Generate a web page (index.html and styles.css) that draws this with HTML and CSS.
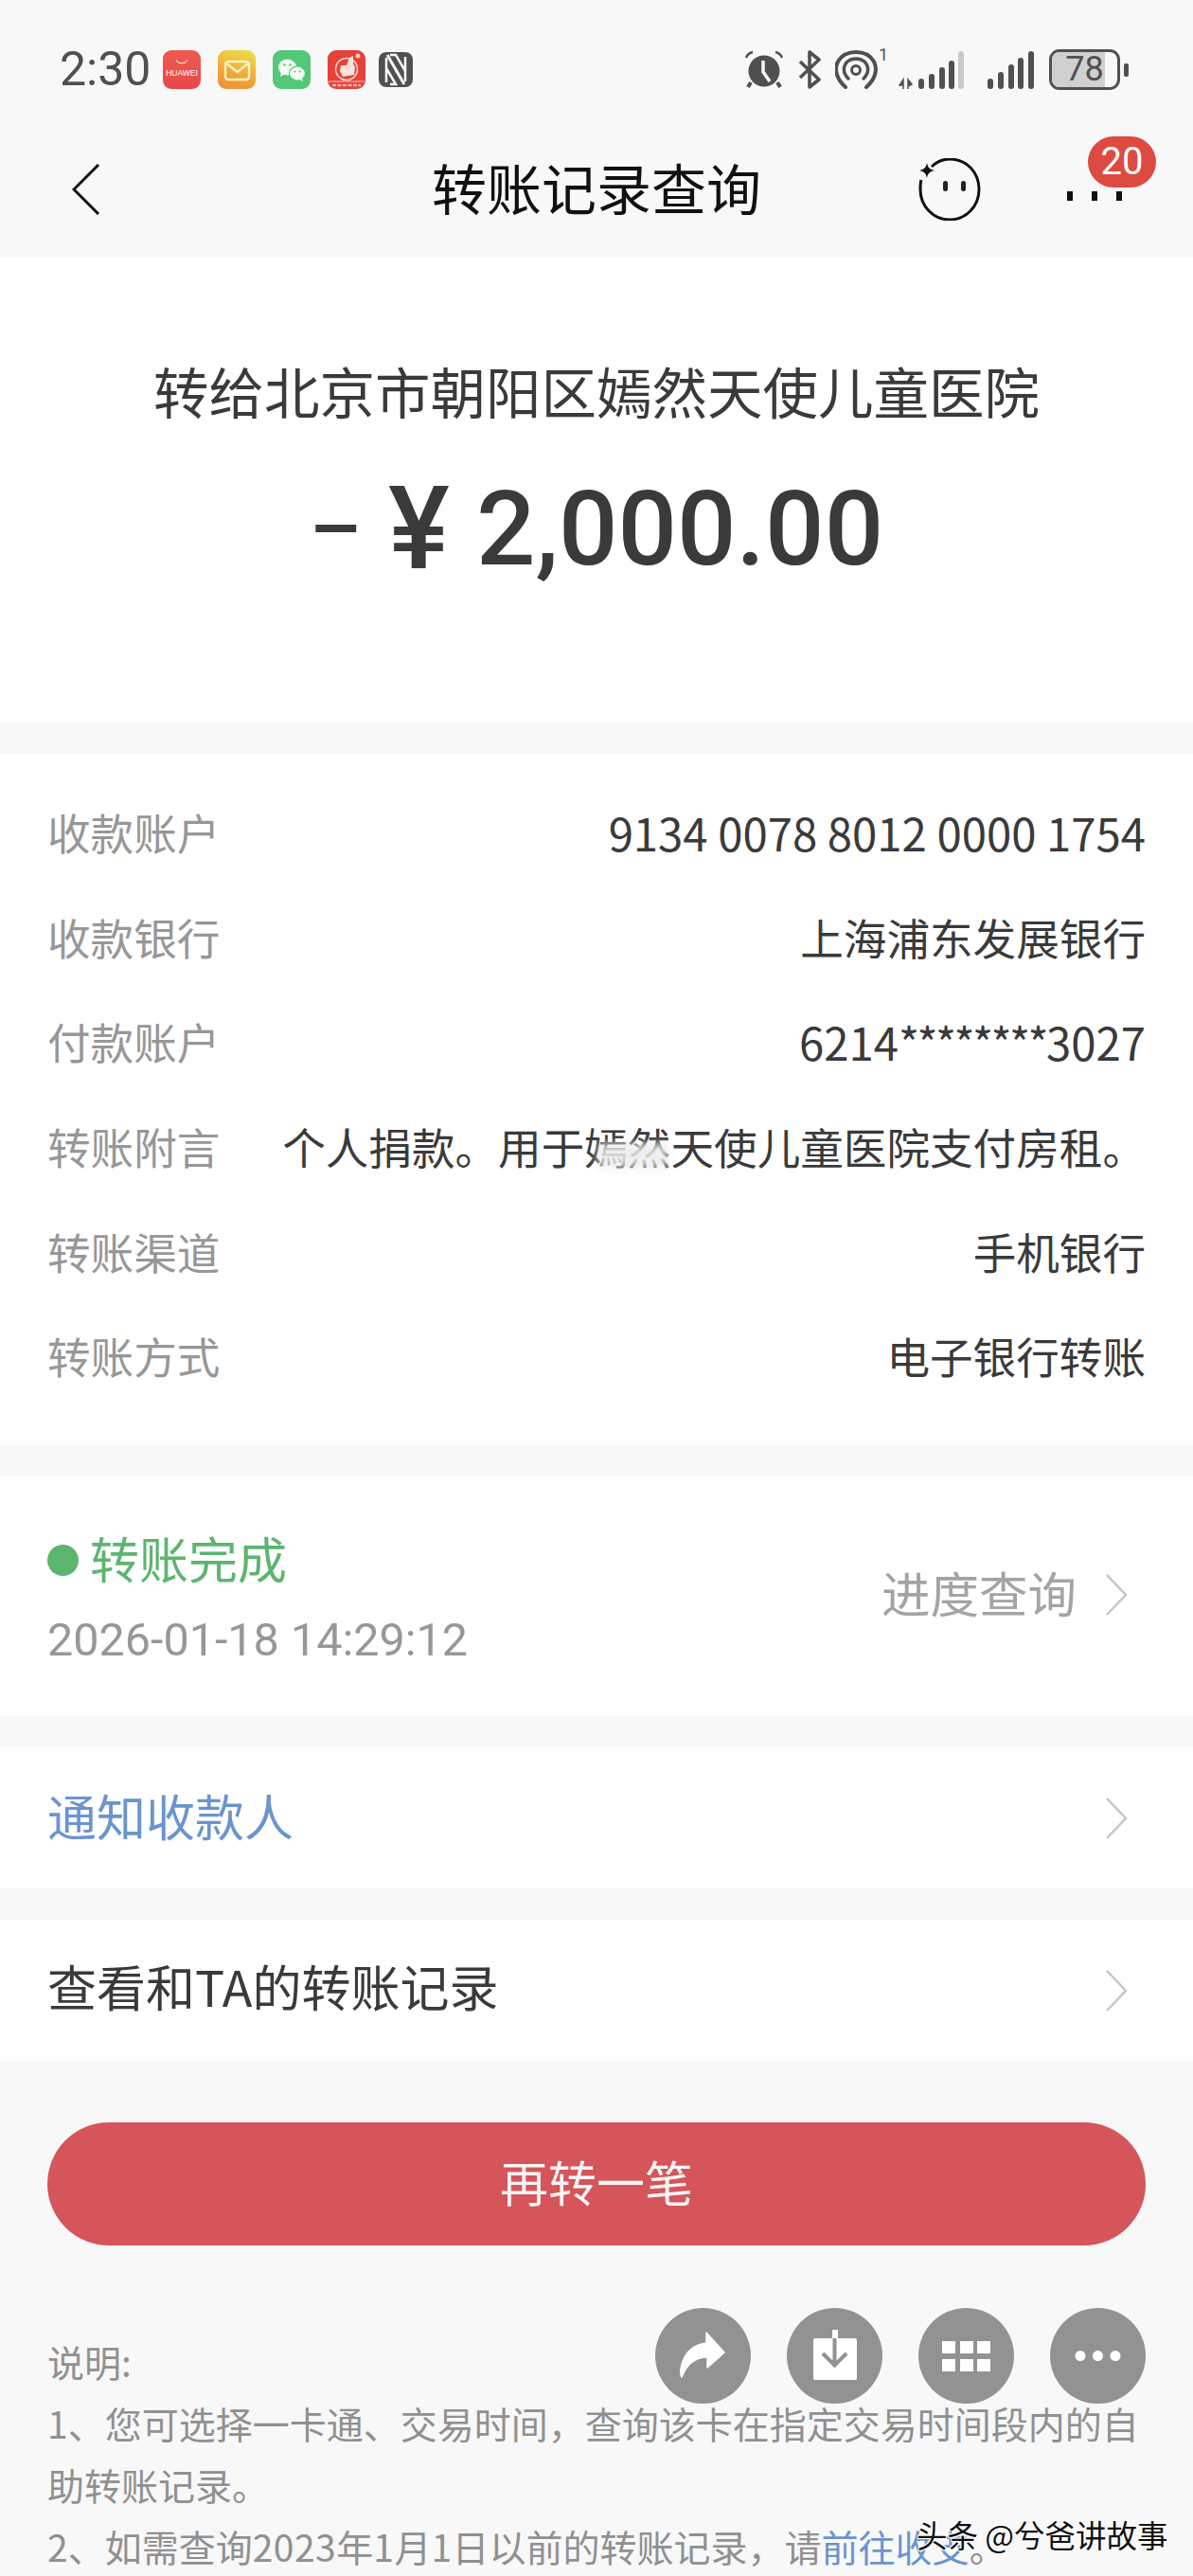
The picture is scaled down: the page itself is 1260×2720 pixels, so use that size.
FILE: index.html
```html
<!DOCTYPE html>
<html lang="zh-CN">
<head>
<meta charset="utf-8">
<title>转账记录查询</title>
<link rel="stylesheet" href="styles.css">
</head>
<body>
<div class="page">
  <header class="top">
    <div class="status">
      <div class="status-left">
        <span class="time">2:30</span>
        <svg class="app" viewBox="0 0 40 41"><defs><linearGradient id="hw" x1="0" y1="0" x2="0" y2="1"><stop offset="0" stop-color="#ef5a50"/><stop offset="1" stop-color="#e8474a"/></linearGradient></defs><rect width="40" height="41" rx="9" fill="url(#hw)"/><path d="M14 10c1 5 11 5 12 0" fill="none" stroke="#fff" stroke-width="1"/><text x="20" y="27" class="hw-text" text-anchor="middle">HUAWEI</text></svg>
        <svg class="app" viewBox="0 0 40 41"><defs><linearGradient id="ml" x1="0.7" y1="0" x2="0.4" y2="1"><stop offset="0" stop-color="#eadd45"/><stop offset="0.6" stop-color="#f0a93a"/><stop offset="1" stop-color="#ef9334"/></linearGradient></defs><rect width="40" height="41" rx="9" fill="url(#ml)"/><rect x="8" y="12" width="25" height="19" rx="3" fill="none" stroke="#fdf2c2" stroke-width="2.4"/><path d="M9 14l11.500 9 11.500-9" fill="none" stroke="#fdf2c2" stroke-width="2.400"/></svg>
        <svg class="app" viewBox="0 0 40 41"><rect width="40" height="41" rx="9" fill="#54c878"/><ellipse cx="15.500" cy="18" rx="9.500" ry="8.500" fill="#f1fbf3"/><path d="M9 23l-1 5 5-3z" fill="#f1fbf3"/><ellipse cx="26" cy="24.500" rx="8.500" ry="7.500" fill="#f1fbf3" stroke="#54c878" stroke-width="1.200"/><path d="M31 30l1 3-4-2z" fill="#f1fbf3"/><circle cx="12.500" cy="15.500" r="1.200" fill="#54c878"/><circle cx="18.500" cy="15.500" r="1.200" fill="#54c878"/><circle cx="23.500" cy="22.500" r="1" fill="#54c878"/><circle cx="28.500" cy="22.500" r="1" fill="#54c878"/></svg>
        <svg class="app app-last" viewBox="0 0 40 41"><rect width="40" height="41" rx="9" fill="#e5423a"/><circle cx="20" cy="20" r="11.500" fill="none" stroke="#f9d5cc" stroke-width="1.500"/><path d="M14 16l6 0 3-8 4-2 0 8 2 4-1 8-12 2-3-6z" fill="#fbe3da"/><circle cx="32" cy="6" r="2.500" fill="#f7c6bb"/><path d="M1 33h38" stroke="#f7c6bb" stroke-width="1"/><path d="M5 37h30" stroke="#f6b5ab" stroke-width="2.500" stroke-dasharray="4 1.500"/></svg>
        <svg class="nfc" viewBox="0 0 36 37"><rect width="36" height="37" rx="8" fill="#505050"/><path d="M9 3l18 31" stroke="#f8f8f8" stroke-width="3"/><path d="M8 6v26M28 5v26" stroke="#f8f8f8" stroke-width="2.500"/><path d="M12 3h6l10 17M8 17l10 17h-6" fill="none" stroke="#f8f8f8" stroke-width="2.500"/></svg>
      </div>
      <div class="status-right">
        <svg class="st-alarm" viewBox="0 0 42 41"><path d="M2 8c1-3 3-5 7-6M40 8c-1-3-3-5-7-6" fill="none" stroke="#505050" stroke-width="2.500"/><circle cx="21" cy="22" r="16.500" fill="#505050"/><path d="M20 11v12l7 10" fill="none" stroke="#f8f8f8" stroke-width="3.500"/><path d="M7 34l-3 5M35 34l3 5" stroke="#505050" stroke-width="4"/></svg>
        <svg class="st-bt" viewBox="0 0 24 41"><path d="M2 29L22 10 12 2v37l10-8L2 12" fill="none" stroke="#505050" stroke-width="3.600" stroke-linejoin="round"/></svg>
        <svg class="st-hot" viewBox="0 0 46 41"><path d="M11 39C1 30-1 20 3 12 7 5 14 2 22 2s15 3 19 10c4 8 2 18-8 27" fill="none" stroke="#505050" stroke-width="4" stroke-linecap="round"/><path d="M14 30C8 24 8 17 13 12c5-4 13-4 18 0 5 5 5 12-1 18" fill="none" stroke="#505050" stroke-width="3.500" stroke-linecap="round"/><circle cx="22" cy="21" r="4.500" fill="none" stroke="#505050" stroke-width="3"/></svg>
        <span class="sim-one">1</span>
        <svg class="st-sig1" viewBox="0 0 70 41"><path d="M5 41V31l-4 6h4M10 41V31l4 5-4 2z" fill="#505050" stroke="#505050" stroke-width="1.500"/><g fill="#505050"><rect x="21" y="30" width="6" height="11" rx="3"/><rect x="32" y="25" width="6" height="16" rx="3"/><rect x="43" y="18" width="6" height="23" rx="3"/><rect x="53" y="11" width="6" height="30" rx="3"/></g><rect x="63" y="1" width="6" height="40" rx="3" fill="#c9c9c9"/></svg>
        <svg class="st-sig2" viewBox="0 0 49 41"><g fill="#505050"><rect x="0" y="30" width="6" height="11" rx="3"/><rect x="11" y="23" width="6" height="18" rx="3"/><rect x="22" y="15" width="6" height="26" rx="3"/><rect x="32" y="8" width="6" height="33" rx="3"/><rect x="43" y="1" width="6" height="40" rx="3"/></g></svg>
        <div class="battery"><span class="battery-level"></span><span class="battery-num">78</span></div>
        <span class="battery-nub"></span>
      </div>
    </div>
    <nav class="nav">
      <svg class="back" viewBox="0 0 30 54"><path d="M28 1L2 27l26 26" fill="none" stroke="#111" stroke-width="3"/></svg>
      <h1 class="title">转账记录查询</h1>
      <div class="nav-right">
        <svg class="face" viewBox="0 0 66 66"><path d="M14 9C20 3 26 1 33 1c18 0 31 14 31 32 0 18-14 32-31 32S2 51 2 33c0-4 0-7 1-10" fill="none" stroke="#111" stroke-width="3"/><path d="M9 5c1 5 3 7 8 8-5 1-7 3-8 8-1-5-3-7-8-8 5-1 7-3 8-8z" fill="#111"/><rect x="26" y="24" width="5" height="11" rx="2.500" fill="#222"/><rect x="45" y="24" width="5" height="11" rx="2.500" fill="#222"/></svg>
        <div class="more">
          <i class="more-dot"></i><i class="more-dot"></i><i class="more-dot"></i>
          <span class="badge">20</span>
        </div>
      </div>
    </nav>
  </header>

  <section class="card summary">
    <div class="payee">转给北京市朝阳区嫣然天使儿童医院</div>
    <div class="amount"><span class="minus">–</span><span class="yen">¥</span><span>2,000.00</span></div>
  </section>

  <section class="card details">
    <div class="row"><span class="label">收款账户</span><span class="value num">9134 0078 8012 0000 1754</span></div>
    <div class="row"><span class="label">收款银行</span><span class="value">上海浦东发展银行</span></div>
    <div class="row"><span class="label">付款账户</span><span class="value num">6214<span class="stars">********</span>3027</span></div>
    <div class="row"><span class="label">转账附言</span><span class="value">个人捐款。用于<span class="blurred">嫣然</span>天使儿童医院支付房租。</span></div>
    <div class="row"><span class="label">转账渠道</span><span class="value">手机银行</span></div>
    <div class="row"><span class="label">转账方式</span><span class="value">电子银行转账</span></div>
  </section>

  <section class="card progress">
    <div class="progress-left">
      <div class="state"><i class="state-dot"></i>转账完成</div>
      <div class="stamp">2026-01-18 14:29:12</div>
    </div>
    <div class="progress-right">
      <span class="progress-text">进度查询</span>
      <svg class="chev" viewBox="0 0 24 44"><path d="M2 1l20 21L2 43" fill="none" stroke="#c6c6c6" stroke-width="2.500"/></svg>
    </div>
  </section>

  <section class="card link-row link-blue">
    <span>通知收款人</span>
    <svg class="chev" viewBox="0 0 24 44"><path d="M2 1l20 21L2 43" fill="none" stroke="#c6c6c6" stroke-width="2.500"/></svg>
  </section>

  <section class="card link-row link-dark">
    <span>查看和TA的转账记录</span>
    <svg class="chev" viewBox="0 0 24 44"><path d="M2 1l20 21L2 43" fill="none" stroke="#c6c6c6" stroke-width="2.500"/></svg>
  </section>

  <button class="again">再转一笔</button>

  <div class="notes">
    <p>说明:</p>
    <p>1、您可选择一卡通、交易时间，查询该卡在指定交易时间段内的自助转账记录。</p>
    <p>2、如需查询<span class="digits">2023</span>年<span class="digits">1</span>月<span class="digits">1</span>日以前的转账记录，请<span class="link">前往收支</span>。</p>
  </div>

  <div class="fabs">
    <span class="fab"><svg viewBox="0 0 101 101"><path d="M54 26L73 47 55 63V52C42 52 33 60 28 73 26 70 26 61 31 52 36 43 45 38 54 37Z" fill="#fff" stroke="#fff" stroke-width="1.500" stroke-linejoin="round"/></svg></span>
    <span class="fab"><svg viewBox="0 0 101 101"><path d="M28 34q0-2 2-2h18v-9h6v9h18q2 0 2 2v40q0 2-2 2H30q-2 0-2-2z" fill="#fff"/><path d="M50.500 32v30M38 48l12.500 12.500L63 48" fill="none" stroke="#929292" stroke-width="4"/></svg></span>
    <span class="fab"><svg viewBox="0 0 101 101"><g fill="#fff"><rect x="25" y="35" width="14" height="13"/><rect x="44" y="35" width="14" height="13"/><rect x="62" y="35" width="14" height="13"/><rect x="25" y="54" width="14" height="13"/><rect x="44" y="54" width="14" height="13"/><rect x="62" y="54" width="14" height="13"/></g></svg></span>
    <span class="fab"><svg viewBox="0 0 101 101"><g fill="#fff"><circle cx="32" cy="50.500" r="5.500"/><circle cx="50.500" cy="50.500" r="5.500"/><circle cx="69" cy="50.500" r="5.500"/></g></svg></span>
  </div>

  <div class="watermark">头条 @兮爸讲故事</div>
</div>
</body>
</html>
```
FILE: styles.css
```css
* { box-sizing: border-box; }
html, body { margin: 0; padding: 0; }
body { background: #f8f8f8; }
.page {
  position: relative;
  width: 1260px;
  height: 2720px;
  overflow: hidden;
  background: #f8f8f8;
  font-family: "Noto Sans CJK SC", "Noto Sans", sans-serif;
  color: #3a3a3a;
}
.top { height: 272px; display: flex; flex-direction: column; }
.status {
  display: flex;
  justify-content: space-between;
  align-items: center;
  height: 41px;
  margin-top: 53px;
  padding: 0 68px 0 63px;
}
.status-left { display: flex; align-items: center; }
.time {
  width: 109px;
  font-family: Roboto, sans-serif;
  font-size: 50px;
  color: #505050;
  line-height: 41px;
}
.app { width: 40px; height: 41px; margin-right: 18px; display: block; }
.app-last { margin-right: 14px; }
.hw-text { font-family: "Liberation Sans", sans-serif; font-size: 8.500px; fill: #fff; }
.nfc { width: 36px; height: 37px; display: block; }
.status-right { display: flex; align-items: center; position: relative; }
.st-alarm { width: 42px; height: 41px; display: block; }
.st-bt { width: 24px; height: 41px; margin-left: 15px; display: block; }
.st-hot { width: 46px; height: 41px; margin-left: 15px; display: block; }
.sim-one {
  width: 8px;
  align-self: flex-start;
  margin-top: -4px;
  font-family: Roboto, sans-serif;
  font-size: 18px;
  line-height: 20px;
  color: #505050;
}
.st-sig1 { width: 70px; height: 41px; margin-left: 13px; display: block; }
.st-sig2 { width: 49px; height: 41px; margin-left: 24px; display: block; }
.battery {
  position: relative;
  width: 75px;
  height: 43px;
  margin-left: 16px;
  border: 3px solid #505050;
  border-radius: 11px;
  overflow: hidden;
  display: flex;
  align-items: center;
  justify-content: center;
}
.battery-level { position: absolute; left: 0; top: 0; bottom: 0; width: 56px; background: #d0d0d0; }
.battery-num {
  position: relative;
  font-family: Roboto, sans-serif;
  font-size: 36px;
  line-height: 37px;
  color: #505050;
}
.battery-nub { width: 5px; height: 14px; margin-left: 4px; border-radius: 2px; background: #505050; }

.nav {
  display: grid;
  grid-template-columns: 1fr auto 1fr;
  align-items: center;
  height: 100px;
  margin-top: 53px;
  padding: 0 39px 0 39px;
}
.back { width: 30px; height: 54px; display: block; margin-left: 37px; margin-top: 6px; }
.title { margin: 0; font-size: 58px; font-weight: 400; line-height: 70px; color: #111; text-align: center; }
.nav-right { display: flex; align-items: center; justify-content: flex-end; margin-top: 6px; }
.face { width: 66px; height: 66px; display: block; }
.more { position: relative; display: flex; gap: 20px; margin-left: 91px; margin-right: 36px; margin-top: 14px; }
.more-dot { width: 6px; height: 10px; background: #111; display: block; }
.badge {
  position: absolute;
  right: -36px;
  top: -58px;
  width: 72px;
  height: 54px;
  border-radius: 27px;
  background: #dd4a40;
  color: #fff;
  font-family: Roboto, sans-serif;
  font-size: 40px;
  line-height: 54px;
  text-align: center;
}

.card { background: #fff; }
.summary { height: 491px; padding-top: 100px; text-align: center; }
.payee { font-size: 58.5px; line-height: 80px; color: #3a3a3a; }
.amount {
  display: flex;
  justify-content: center;
  align-items: center;
  gap: 28px;
  margin-top: 47px;
  font-family: Roboto, sans-serif;
  font-weight: 500;
  font-size: 110px;
  line-height: 120px;
  color: #3a3a3a;
}
.minus { font-size: 86px; }
.yen { font-size: 122px; }
.details { margin-top: 33px; height: 730px; padding: 27px 50px 39px; }
.row {
  display: flex;
  justify-content: space-between;
  align-items: center;
  height: 110.6px;
  font-size: 45.6px;
}
.label { color: #979797; }
.value { color: #3a3a3a; font-size: 45.6px; }
.num { font-size: 47.3px; }
.stars { letter-spacing: -2.6px; }
.blurred { position: relative; }
.blurred::after {
  content: "";
  position: absolute;
  left: 14px;
  right: 2px;
  top: 30px;
  height: 26px;
  background: rgba(235, 235, 235, 0.85);
  filter: blur(4px);
}
.progress {
  margin-top: 33px;
  height: 253px;
  padding: 45px 35px 40px 50px;
  display: flex;
  justify-content: space-between;
  align-items: center;
}
.state { display: flex; align-items: center; font-size: 52px; line-height: 84px; color: #5cb56f; }
.state-dot { width: 33px; height: 33px; margin-right: 12px; border-radius: 50%; background: #5cb56f; margin-top: 5px; }
.stamp { font-family: Roboto, sans-serif; font-size: 48.5px; line-height: 84px; color: #979797; margin-top: 3px; }
.progress-right {
  display: flex;
  align-items: center;
  gap: 30px;
  padding-bottom: 9px;
  font-size: 51.5px;
  color: #a3a3a3;
}
.progress-text { margin-bottom: 6px; }
.chev { width: 24px; height: 44px; display: block; margin-right: 34px; }
.link-row {
  margin-top: 33px;
  height: 149px;
  padding: 0 35px 0 50px;
  display: flex;
  justify-content: space-between;
  align-items: center;
  font-size: 52px;
  color: #3a3a3a;
}
.link-row span { margin-bottom: 6px; }
.link-dark span { margin-bottom: 10px; }
.link-blue { color: #6a94d0; }
.again {
  display: block;
  width: 1160px;
  height: 130px;
  margin: 65px 50px 0;
  padding: 0 0 6px;
  border: 0;
  border-radius: 65px;
  background: #d5555a;
  color: #f5f5f5;
  font: inherit;
  font-size: 51px;
}
.notes { margin-top: 90px; padding: 0 50px; font-size: 39px; line-height: 65px; color: #909090; }
.notes p { margin: 0; }
.digits { letter-spacing: 0.5px; }
.link { color: #6a94d0; }
.fabs { position: absolute; top: 2437px; right: 50px; display: flex; gap: 38px; }
.fab { width: 101px; height: 101px; border-radius: 50%; background: #929292; display: block; }
.fab svg { width: 101px; height: 101px; display: block; }
.watermark {
  position: absolute;
  left: 968px;
  top: 2654px;
  font-size: 32.5px;
  line-height: 44px;
  color: #111;
  text-shadow: 1px 1px 0 #fff, -1px -1px 0 #fff, 1px -1px 0 #fff, -1px 1px 0 #fff;
}
```
